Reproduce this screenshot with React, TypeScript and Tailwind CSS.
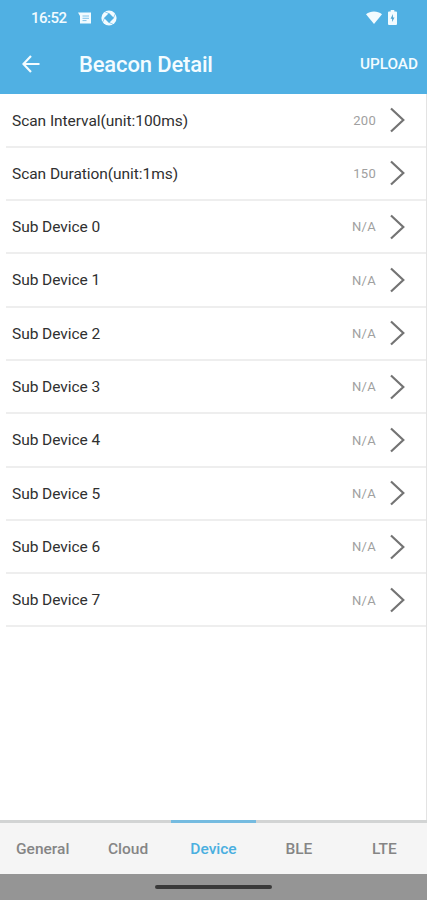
const rows = [
  { label: 'Scan Interval(unit:100ms)', value: '200' },
  { label: 'Scan Duration(unit:1ms)', value: '150' },
  { label: 'Sub Device 0', value: 'N/A' },
  { label: 'Sub Device 1', value: 'N/A' },
  { label: 'Sub Device 2', value: 'N/A' },
  { label: 'Sub Device 3', value: 'N/A' },
  { label: 'Sub Device 4', value: 'N/A' },
  { label: 'Sub Device 5', value: 'N/A' },
  { label: 'Sub Device 6', value: 'N/A' },
  { label: 'Sub Device 7', value: 'N/A' },
];

const tabs = ['General', 'Cloud', 'Device', 'BLE', 'LTE'];

function StatusBar() {
  return (
    <div className="flex h-9 items-center pl-[31px] pr-[30px] text-[#f2fbff]">
      <span className="w-[47px] text-[15px] leading-none font-medium tracking-[-0.5px]">16:52</span>
      <svg className="mr-[9px] h-[13px] w-[14px]" viewBox="0 0 14 13">
        <path d="M0 .5h13v11H2V4z" fill="currentColor" />
        <path d="M4.5 4h6.5M4.5 6.3h6.5M4.5 8.6h4" stroke="#7fc4ea" strokeWidth="1" />
      </svg>
      <svg className="mb-px h-4 w-4" viewBox="0 0 16 16">
        <circle cx="8" cy="8" r="7.6" fill="currentColor" />
        <path d="M8 3 13 8 8 13 3 8z" fill="#50b0e3" />
        <path d="M8 3.600 4 1.800M12.400 8l1.900-4M8 12.400l4 1.900M3.600 8l-1.900 4" stroke="#50b0e3" strokeWidth=".6" />
      </svg>
      <svg className="mr-[6px] mb-px ml-auto h-[13px] w-4" viewBox="0 0 16 13">
        <path d="M0 3.2C4.6-.5 11.4-.5 16 3.2L8 13z" fill="currentColor" />
      </svg>
      <svg className="mb-px h-[15px] w-[9px]" viewBox="0 0 9 15">
        <path d="M2.7 0h3.6v1.5H8q1 0 1 1V14q0 1-1 1H1q-1 0-1-1V2.500q0-1 1-1h1.700z" fill="currentColor" />
        <path d="M4.900 4 2.600 8.700h1.500V12l2.400-4.600H4.900z" fill="#50a4d3" />
      </svg>
    </div>
  );
}

function Toolbar() {
  return (
    <div className="flex h-[57px] items-center pr-[9px] pl-[22px] text-[#f4fcff]">
      <svg className="mb-[2px] h-[18px] w-[18px]" viewBox="0 0 18 18" fill="none" stroke="currentColor" strokeWidth="2.200">
        <path d="M17.500 9H1.500M9 1 1.400 9 9 17" />
      </svg>
      <h1 className="ml-[39px] text-[22px] leading-none font-medium tracking-[-0.150px]">Beacon Detail</h1>
      <button className="ml-auto text-[15.300px] leading-none font-medium">UPLOAD</button>
    </div>
  );
}

export default function App() {
  return (
    <div className="flex h-[900px] w-[427px] flex-col overflow-hidden bg-white font-[Roboto,sans-serif]">
      <header className="h-[93.500px] shrink-0 bg-[#50b0e3]">
        <StatusBar />
        <Toolbar />
      </header>
      <main className="flex-1 border-r border-[#e3e3e3] pt-[1px] pl-[6px]">
        {rows.map((row) => (
          <div
            key={row.label}
            className="flex h-[53.300px] items-center border-b-2 border-[#eeeeee] pr-[21px] pl-[6px]"
          >
            <span className="pt-[2px] text-[15.500px] tracking-[-0.050px] text-[#303030]">{row.label}</span>
            <span className="ml-auto pt-[1px] text-[13px] tracking-[0.300px] text-[#a0a0a0]">{row.value}</span>
            <svg className="ml-[14px] h-[26px] w-[15px]" viewBox="0 0 15 26" fill="none" stroke="#747474" strokeWidth="2.200">
              <path d="M1 1.500 13.300 13 1 24.500" />
            </svg>
          </div>
        ))}
      </main>
      <nav className="grid h-[54.500px] shrink-0 grid-cols-5 bg-[#f5f5f5]">
        {tabs.map((tab) => (
          <div
            key={tab}
            className={`flex items-center justify-center border-t-[3px] pt-[3px] text-[15.500px] font-medium ${
              tab === 'Device' ? 'border-[#75bbe0] text-[#4aafe0]' : 'border-[#d2d4d4] text-[#858585]'
            }`}
          >
            {tab}
          </div>
        ))}
      </nav>
      <footer className="flex h-[26px] shrink-0 justify-center bg-[#959595] pt-[11px]">
        <div className="h-1 w-[117px] rounded-full bg-[#3a3a3a]" />
      </footer>
    </div>
  );
}
